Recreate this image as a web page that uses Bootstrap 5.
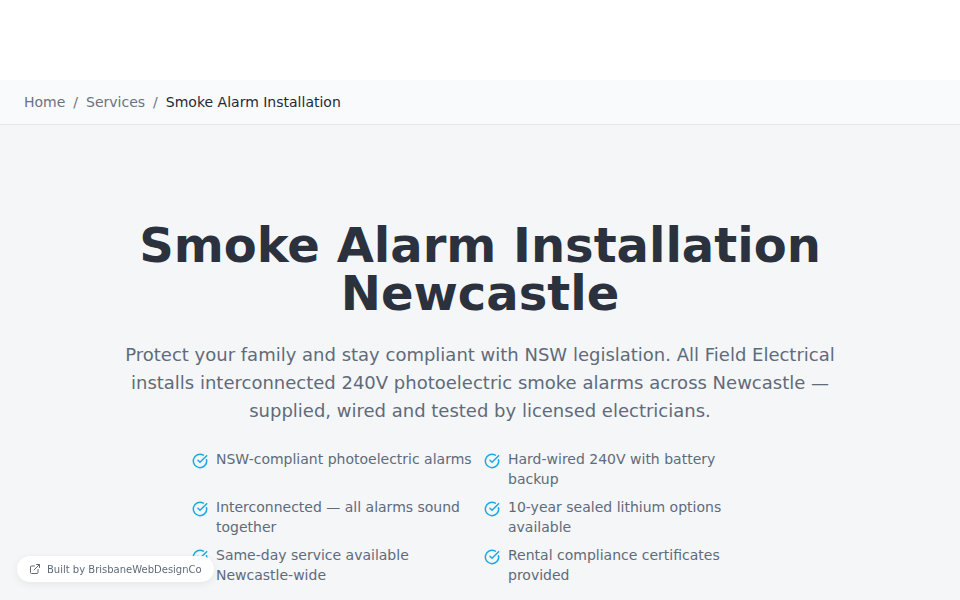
<!DOCTYPE html>
<html lang="en">
<head>
  <meta charset="UTF-8">
  <title>Smoke Alarm Installation Newcastle</title>
  <meta name="viewport" content="width=device-width, initial-scale=1">
  <link href="https://cdn.jsdelivr.net/npm/bootstrap@5.3.3/dist/css/bootstrap.min.css" rel="stylesheet">
  <style>
    body { font-family: "DejaVu Sans", sans-serif; background: #f4f6f8; overflow: hidden; }
    .top-space { height: 80px; background: #fff; }
    .crumb-bar { height: 45px; background: #f9fafb; border-bottom: 1px solid #e5e7eb; padding: 0 24px; font-size: 14px; }
    .crumb-bar .breadcrumb { --bs-breadcrumb-divider-color: #6b7280; --bs-breadcrumb-item-active-color: #1f2937; --bs-breadcrumb-item-padding-x: 8px; }
    .crumb-bar a { color: #6b7280; text-decoration: none; }
    .hero { padding: 96px 24px 0; background: #f4f6f8; }
    .hero-title { font-size: 48px; line-height: 48px; font-weight: 700; color: #2b313d; margin-bottom: 24px; }
    .hero-lead { font-size: 18px; line-height: 28px; color: #5f6b7a; max-width: 720px; margin: 0 auto 24px; }
    .tick-grid { display: grid; grid-template-columns: 280px 280px; column-gap: 12px; row-gap: 8px; width: 576px; margin: 0 auto; padding: 0; list-style: none; font-size: 14px; line-height: 20px; color: #5f6b7a; }
    .tick-grid svg { flex: none; width: 16px; height: 16px; margin-top: 4px; color: #1ea7e4; }
    .built-badge { position: fixed; left: 17px; bottom: 18px; height: 26px; padding: 0 12px; gap: 6px; background: #fff; border-radius: 13px; box-shadow: 0 2px 8px rgba(0,0,0,.07); font-size: 10px; color: #5f6b7a; }
    .built-badge svg { width: 12px; height: 12px; }
  </style>
</head>
<body>
  <div class="top-space"></div>

  <nav class="crumb-bar d-flex align-items-center" aria-label="breadcrumb">
    <ol class="breadcrumb mb-0">
      <li class="breadcrumb-item"><a href="#">Home</a></li>
      <li class="breadcrumb-item"><a href="#">Services</a></li>
      <li class="breadcrumb-item active" aria-current="page">Smoke Alarm Installation</li>
    </ol>
  </nav>

  <section class="hero text-center">
    <h1 class="hero-title">Smoke Alarm Installation<br>Newcastle</h1>
    <p class="hero-lead">Protect your family and stay compliant with NSW legislation. All Field Electrical installs interconnected 240V photoelectric smoke alarms across Newcastle — supplied, wired and tested by licensed electricians.</p>
    <ul class="tick-grid text-start">
      <li class="d-flex gap-2"><svg viewBox="0 0 24 24" fill="none" stroke="currentColor" stroke-width="2.25" stroke-linecap="round" stroke-linejoin="round"><path d="M21.801 10A10 10 0 1 1 17 3.335"/><path d="m9 11 3 3L22 4"/></svg><span>NSW-compliant photoelectric alarms</span></li>
      <li class="d-flex gap-2"><svg viewBox="0 0 24 24" fill="none" stroke="currentColor" stroke-width="2.25" stroke-linecap="round" stroke-linejoin="round"><path d="M21.801 10A10 10 0 1 1 17 3.335"/><path d="m9 11 3 3L22 4"/></svg><span>Hard-wired 240V with battery backup</span></li>
      <li class="d-flex gap-2"><svg viewBox="0 0 24 24" fill="none" stroke="currentColor" stroke-width="2.25" stroke-linecap="round" stroke-linejoin="round"><path d="M21.801 10A10 10 0 1 1 17 3.335"/><path d="m9 11 3 3L22 4"/></svg><span>Interconnected — all alarms sound together</span></li>
      <li class="d-flex gap-2"><svg viewBox="0 0 24 24" fill="none" stroke="currentColor" stroke-width="2.25" stroke-linecap="round" stroke-linejoin="round"><path d="M21.801 10A10 10 0 1 1 17 3.335"/><path d="m9 11 3 3L22 4"/></svg><span>10-year sealed lithium options available</span></li>
      <li class="d-flex gap-2"><svg viewBox="0 0 24 24" fill="none" stroke="currentColor" stroke-width="2.25" stroke-linecap="round" stroke-linejoin="round"><path d="M21.801 10A10 10 0 1 1 17 3.335"/><path d="m9 11 3 3L22 4"/></svg><span>Same-day service available Newcastle-wide</span></li>
      <li class="d-flex gap-2"><svg viewBox="0 0 24 24" fill="none" stroke="currentColor" stroke-width="2.25" stroke-linecap="round" stroke-linejoin="round"><path d="M21.801 10A10 10 0 1 1 17 3.335"/><path d="m9 11 3 3L22 4"/></svg><span>Rental compliance certificates provided</span></li>
    </ul>
  </section>

  <div class="built-badge d-flex align-items-center">
    <svg viewBox="0 0 24 24" fill="none" stroke="currentColor" stroke-width="2" stroke-linecap="round" stroke-linejoin="round"><path d="M15 3h6v6"/><path d="M10 14 21 3"/><path d="M18 13v6a2 2 0 0 1-2 2H5a2 2 0 0 1-2-2V8a2 2 0 0 1 2-2h6"/></svg>
    <span>Built by BrisbaneWebDesignCo</span>
  </div>

  <script src="https://cdn.jsdelivr.net/npm/bootstrap@5.3.3/dist/js/bootstrap.bundle.min.js"></script>
</body>
</html>
